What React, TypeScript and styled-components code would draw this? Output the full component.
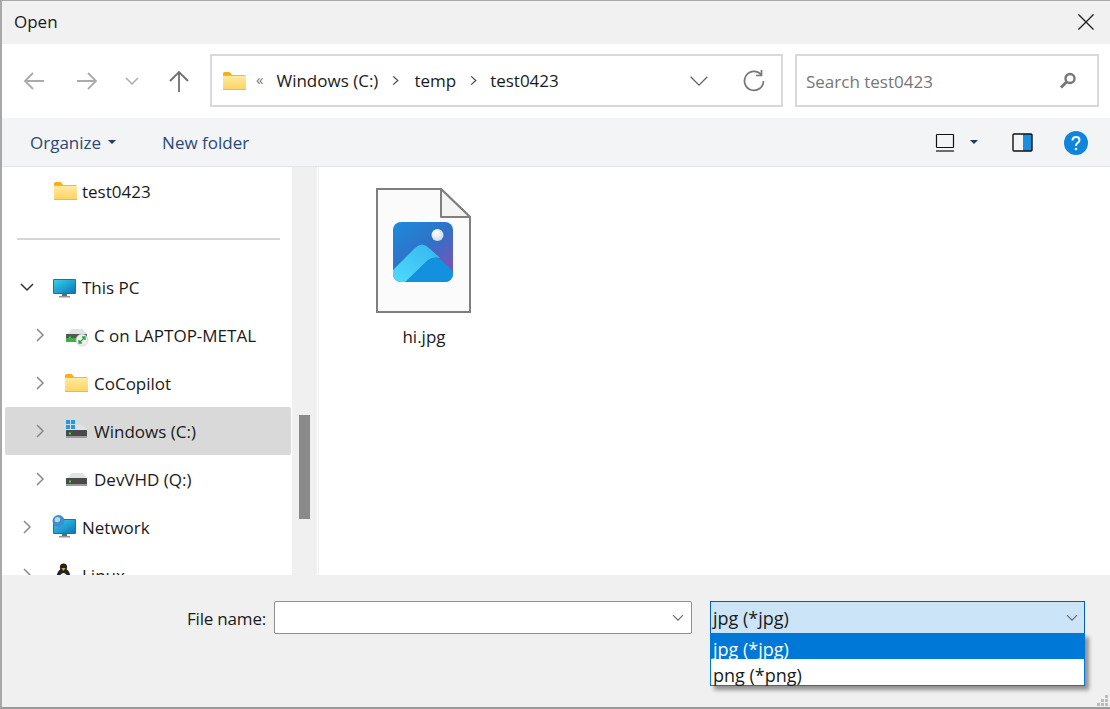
import React from 'react'
import styled, { createGlobalStyle } from 'styled-components'

const GlobalStyle = createGlobalStyle`
  html, body {
    margin: 0;
    padding: 0;
    background: #fff;
  }
  body {
    font-family: 'Open Sans', 'Noto Sans', 'Liberation Sans', sans-serif;
    font-size: 17px;
    color: #1a1a1a;
    overflow: hidden;
  }
`

const Dialog = styled.div`
  position: relative;
  width: 1110px;
  height: 709px;
  box-sizing: border-box;
  border-top: 1px solid #a8a8a8;
  border-left: 2px solid #a8a8a8;
  border-bottom: 2px solid #9a9a9a;
  display: flex;
  flex-direction: column;
  overflow: hidden;
`

const TitleBar = styled.div`
  height: 43px;
  flex: none;
  box-sizing: border-box;
  background: #f1f1f1;
  display: flex;
  align-items: center;
  justify-content: space-between;
  padding: 0 15px 1px 12px;
`

const TitleText = styled.span`
  padding-bottom: 2px;
`

const AddressRow = styled.div`
  height: 74px;
  flex: none;
  box-sizing: border-box;
  background: #fff;
  display: flex;
  align-items: center;
  padding: 0 9px 1px 0;
`

const NavGroup = styled.div`
  width: 208px;
  flex: none;
  display: flex;
  align-items: center;
`

const NavButton = styled.span<{ $w: number }>`
  width: ${(p) => p.$w}px;
  display: flex;
  justify-content: center;
  flex: none;
`

const RefreshButton = styled(NavButton)`
  margin-left: 10px;
`

const FieldBox = styled.div<{ $w: number }>`
  width: ${(p) => p.$w}px;
  height: 53px;
  box-sizing: border-box;
  border: 2px solid #d9d9d9;
  display: flex;
  align-items: center;
  flex: none;
`

const AddressBox = styled(FieldBox)`
  padding: 0 2px 0 11px;
  margin-right: 12px;
`

const Crumbs = styled.div`
  flex: 1;
  display: flex;
  align-items: center;
  color: #1a1a1a;
`

const CrumbSep = styled.span<{ $mr: number }>`
  display: flex;
  margin: 0 ${(p) => p.$mr}px 0 12px;
`

const Overflow = styled.span`
  font-size: 15px;
  color: #777;
  margin: -3px 13px 0 10px;
`

const SearchBox = styled(FieldBox)`
  padding: 0 20px 0 9px;
  justify-content: space-between;
  color: #767676;
`

const SearchText = styled.span`
  padding-top: 2px;
`

const Toolbar = styled.div`
  height: 49px;
  flex: none;
  box-sizing: border-box;
  background: #f3f4f6;
  border-bottom: 1px solid #e4e4e4;
  display: flex;
  align-items: center;
  padding: 1px 10px 0 28px;
  color: #2a4a73;
`

const ToolLabel = styled.span`
  display: flex;
  align-items: center;
  gap: 7px;
  margin-right: 46px;
`

const Caret = styled.span`
  width: 0;
  height: 0;
  border-left: 4px solid transparent;
  border-right: 4px solid transparent;
  border-top: 4px solid #1f3a63;
  margin-top: -1px;
`

const ToolIcons = styled.div`
  margin-left: auto;
  display: flex;
  align-items: center;
`

const ToolIcon = styled.span<{ $mr: number }>`
  display: flex;
  margin-right: ${(p) => p.$mr}px;
`

const Main = styled.div`
  flex: 1;
  min-height: 0;
  display: flex;
  background: #fff;
`

const Sidebar = styled.div`
  width: 290px;
  flex: none;
  overflow: hidden;
  padding: 0 1px 0 3px;
  box-sizing: border-box;
`

const Row = styled.div<{ $selected?: boolean; $indent: number }>`
  height: 48px;
  box-sizing: border-box;
  display: flex;
  align-items: center;
  padding-left: ${(p) => p.$indent}px;
  border-radius: 2px;
  background: ${(p) => (p.$selected ? '#d9d9d9' : 'transparent')};
`

const Chevron = styled.span`
  width: 22px;
  display: flex;
  justify-content: center;
  flex: none;
  margin-right: 14px;
`

const RowIcon = styled.span<{ $mr: number }>`
  display: flex;
  flex: none;
  margin-right: ${(p) => p.$mr}px;
`

const Divider = styled.div`
  height: 48px;
  display: flex;
  align-items: center;
  padding: 0 11px 0 12px;
  &::after {
    content: '';
    flex: 1;
    height: 2px;
    background: #d6d6d6;
  }
`

const ScrollTrack = styled.div`
  width: 25px;
  flex: none;
  background: #f0f0f0;
  padding: 248px 7px 0;
  box-sizing: border-box;
`

const ScrollThumb = styled.div`
  height: 104px;
  background: #8a8a8a;
`

const Files = styled.div`
  flex: 1;
  border-left: 1px solid #ededed;
  margin-left: 1px;
  padding: 21px 0 0 40px;
`

const FileTile = styled.div`
  width: 130px;
  display: flex;
  flex-direction: column;
  align-items: center;
  gap: 11px;
`

const Footer = styled.div`
  height: 132px;
  flex: none;
  background: #f0f0f0;
  padding: 26px 25px 0 0;
  box-sizing: border-box;
  display: flex;
  justify-content: flex-end;
  align-items: flex-start;
  gap: 18px;
`

const FileNameGroup = styled.div`
  display: flex;
  align-items: center;
  gap: 8px;
`

const FileNameLabel = styled.span`
  padding-top: 2px;
  letter-spacing: -0.2px;
`

const FileNameInput = styled.div`
  width: 418px;
  height: 33px;
  box-sizing: border-box;
  background: #fff;
  border: 1px solid #8f8f8f;
  border-radius: 2px;
  display: flex;
  align-items: center;
  justify-content: flex-end;
  padding-right: 7px;
`

const FilterSelect = styled.div`
  width: 375px;
  height: 33px;
  box-sizing: border-box;
  background: #cce4f7;
  border: 1px solid #005fb8;
  display: flex;
  align-items: center;
  justify-content: space-between;
  padding: 0 6px 0 2px;
  color: #1a1a1a;
  font-size: 18px;
`

const FilterMenu = styled.div`
  position: absolute;
  left: 708px;
  top: 632px;
  width: 375px;
  box-sizing: border-box;
  background: #fff;
  border: 1px solid #0078d7;
  border-top: none;
  box-shadow: 4px 4px 4px rgba(0, 0, 0, 0.4);
  font-size: 18px;
`

const FilterOption = styled.div<{ $active?: boolean }>`
  height: 26px;
  box-sizing: border-box;
  line-height: 26px;
  padding: 3px 0 0 2px;
  background: ${(p) => (p.$active ? '#0078d7' : '#fff')};
  color: ${(p) => (p.$active ? '#fff' : '#1a1a1a')};
`

const Grip = styled.svg`
  position: absolute;
  right: 1px;
  bottom: 0;
`

const Stroke = ({ d, color, w = 1.6, size = 24 }: { d: string; color: string; w?: number; size?: number }) => (
  <svg width={size} height={size} viewBox="0 0 24 24" fill="none" stroke={color} strokeWidth={w}>
    <path d={d} />
  </svg>
)

const Folder = ({ w = 23, h = 18 }: { w?: number; h?: number }) => (
  <svg width={w} height={h} viewBox="0 0 23 18">
    <defs>
      <linearGradient id="fold" x1="0" y1="0" x2="0" y2="1">
        <stop offset="0" stopColor="#ffeaa0" />
        <stop offset="1" stopColor="#fdd468" />
      </linearGradient>
    </defs>
    <path d="M0 1.5 Q0 0 1.5 0 H6.5 L9 2.5 V4 H0 Z" fill="#f6b015" />
    <path d="M0 3 H21.5 Q23 3 23 4.5 V18 H0 Z" fill="#f4b73c" />
    <path d="M0 4 H23 V17 H0 Z" fill="url(#fold)" />
  </svg>
)

const Monitor = ({ globe }: { globe?: boolean }) => (
  <svg width="25" height="25" viewBox="0 0 25 25">
    <defs>
      <linearGradient id="scr" x1="0" y1="0" x2="1" y2="1">
        <stop offset="0" stopColor="#35d3e8" />
        <stop offset="1" stopColor="#0a74bd" />
      </linearGradient>
    </defs>
    <rect x="1" y="4" width="23" height="15" rx="1" fill="#4d6470" />
    <rect x="2" y="5" width="21" height="13" fill="url(#scr)" />
    <rect x="10" y="19" width="5" height="2" fill="#5f6d75" />
    <rect x="7" y="21" width="11" height="1.5" fill="#8d979d" />
    {globe ? (
      <>
        <circle cx="6.5" cy="6" r="6" fill="#3b8fd0" />
        <path d="M3 3 Q6 1 8 3 Q9 6 6 7 Q3 8 2.5 5 Z" fill="#b5d7ef" />
      </>
    ) : null}
  </svg>
)

const Drive = ({ badge, win }: { badge?: boolean; win?: boolean }) => (
  <svg width="24" height="24" viewBox="0 0 24 24">
    <path d="M3 11 L6.5 6 H17.5 L22 11 Z" fill="#dfe3e6" />
    <rect x="1" y="11" width="21" height="7" rx="0.5" fill={badge ? '#555' : '#4a4a4a'} />
    <rect x="1" y="17" width="21" height="2" fill="#9a9a9a" />
    <rect x="4" y="13.5" width="2" height="2" fill="#3fdc3f" />
    {win ? (
      <>
        <rect x="1" y="1" width="4" height="4" fill="#1e9be8" />
        <rect x="6" y="1" width="4" height="4" fill="#1e9be8" />
        <rect x="1" y="6" width="4" height="4" fill="#1e9be8" />
        <rect x="6" y="6" width="4" height="4" fill="#1e9be8" />
      </>
    ) : null}
    {badge ? (
      <>
        <rect x="1" y="15" width="15" height="4" fill="#3fae4a" />
        <circle cx="17" cy="17" r="6" fill="#eef0ee" stroke="#bbb" strokeWidth="0.5" />
        <path d="M14 20 L20 14 M17 14 H20 V17 M14 17 V20 H17" stroke="#2ea043" strokeWidth="1.3" fill="none" />
      </>
    ) : null}
  </svg>
)

const Penguin = () => (
  <svg width="23" height="24" viewBox="0 0 23 24">
    <ellipse cx="11.5" cy="15" rx="7" ry="10" fill="#222" />
    <ellipse cx="11.5" cy="17" rx="4.5" ry="7" fill="#f4f4f4" />
    <circle cx="11.5" cy="4" r="3.6" fill="#222" />
    <path d="M9.5 5 L13.5 5 L11.5 8 Z" fill="#e8a81e" />
  </svg>
)

const ImageFile = () => (
  <svg width="96" height="126" viewBox="0 0 96 126">
    <defs>
      <linearGradient id="sky" x1="0" y1="0" x2="0.8" y2="1">
        <stop offset="0" stopColor="#1c8cdc" />
        <stop offset="0.5" stopColor="#2e72c8" />
        <stop offset="1" stopColor="#7f52b6" />
      </linearGradient>
      <linearGradient id="ridge" x1="0" y1="1" x2="1" y2="0">
        <stop offset="0" stopColor="#4fdcfb" />
        <stop offset="1" stopColor="#34b4ee" />
      </linearGradient>
      <radialGradient id="sun" cx="0.4" cy="0.35" r="0.7">
        <stop offset="0" stopColor="#ffffff" />
        <stop offset="1" stopColor="#cfd6e2" />
      </radialGradient>
      <clipPath id="tile">
        <rect x="17" y="34" width="60" height="60" rx="8" />
      </clipPath>
    </defs>
    <path d="M1 1 H65 L94 29 V124 H1 Z" fill="#fbfbfb" stroke="#7f7f7f" strokeWidth="2" />
    <path d="M65 1 V29 H94 Z" fill="#f4f4f4" stroke="#7f7f7f" strokeWidth="2" strokeLinejoin="round" />
    <g clipPath="url(#tile)">
      <rect x="17" y="34" width="60" height="60" fill="url(#sky)" />
      <circle cx="61.5" cy="47" r="6" fill="url(#sun)" />
      <path d="M17 82 L39 60 Q46 53 53 60 L64 70 Q56 68 50 74 L30 94 H17 Z" fill="url(#ridge)" />
      <path d="M29 94 L49 75 Q56 67 64 71 L77 83 V94 Z" fill="#1491de" />
    </g>
  </svg>
)

const SmallChevron = ({ open }: { open?: boolean }) =>
  open ? (
    <Stroke size={18} color="#333" w={2} d="M4 8 L12 16 L20 8" />
  ) : (
    <Stroke size={18} color="#8a8a8a" w={2} d="M8 4 L16 12 L8 20" />
  )

const DropChevron = () => (
  <svg width="12" height="8" viewBox="0 0 12 8" fill="none" stroke="#666" strokeWidth="1.1">
    <path d="M1 1.2 L6 6.2 L11 1.2" />
  </svg>
)

export default function App() {
  return (
    <>
      <GlobalStyle />
      <Dialog>
        <TitleBar>
          <TitleText>Open</TitleText>
          <Stroke size={18} color="#222" w={1.8} d="M2 2 L22 22 M22 2 L2 22" />
        </TitleBar>
        <AddressRow>
          <NavGroup>
            <NavButton $w={64}>
              <Stroke color="#ababab" w={1.8} d="M22 12 H3 M11 4 L3 12 L11 20" />
            </NavButton>
            <NavButton $w={42}>
              <Stroke color="#ababab" w={1.8} d="M2 12 H21 M13 4 L21 12 L13 20" />
            </NavButton>
            <NavButton $w={48}>
              <Stroke size={18} color="#ababab" w={2} d="M4 8 L12 16 L20 8" />
            </NavButton>
            <NavButton $w={46}>
              <Stroke color="#6f6f6f" w={1.8} d="M12 23 V3 M3 12 L12 3 L21 12" />
            </NavButton>
          </NavGroup>
          <AddressBox $w={573}>
            <Folder />
            <Overflow>«</Overflow>
            <Crumbs>
              Windows (C:)
              <CrumbSep $mr={13}>
                <Stroke size={11} color="#444" w={2.6} d="M7 3 L17 12 L7 21" />
              </CrumbSep>
              temp
              <CrumbSep $mr={11}>
                <Stroke size={11} color="#444" w={2.6} d="M7 3 L17 12 L7 21" />
              </CrumbSep>
              test0423
            </Crumbs>
            <NavButton $w={40}>
              <Stroke size={20} color="#666" w={1.6} d="M2 7 L12 17 L22 7" />
            </NavButton>
            <RefreshButton $w={50}>
              <Stroke color="#777" w={1.7} d="M19 5.5 A9.5 9.5 0 1 0 21.5 12 M19.5 1 V6.5 H14" />
            </RefreshButton>
          </AddressBox>
          <SearchBox $w={304}>
            <SearchText>Search test0423</SearchText>
            <svg width="18" height="18" viewBox="0 0 18 18" fill="none" stroke="#777">
              <circle cx="11" cy="6.5" r="4.5" strokeWidth="2.4" />
              <path d="M7.5 10 L2 15.5" strokeWidth="3" />
            </svg>
          </SearchBox>
        </AddressRow>
        <Toolbar>
          <ToolLabel>
            Organize <Caret />
          </ToolLabel>
          <ToolLabel>New folder</ToolLabel>
          <ToolIcons>
            <ToolIcon $mr={15}>
              <svg width="20" height="19" viewBox="0 0 20 19" fill="none" stroke="#111">
                <rect x="1.5" y="1.5" width="17" height="13" rx="0.5" strokeWidth="1.2" />
                <path d="M1 18 H19" strokeWidth="1.2" />
              </svg>
            </ToolIcon>
            <ToolIcon $mr={34}>
              <Caret />
            </ToolIcon>
            <ToolIcon $mr={31}>
              <svg width="21" height="19" viewBox="0 0 21 19">
                <rect x="11" y="1" width="9" height="17" fill="#1a8fe0" />
                <rect x="1" y="1" width="19" height="17" rx="1" fill="none" stroke="#111" strokeWidth="1.4" />
              </svg>
            </ToolIcon>
            <ToolIcon $mr={12}>
              <svg width="24" height="24" viewBox="0 0 24 24">
                <circle cx="12" cy="12" r="12" fill="#0f86dc" />
                <path d="M8.5 9.5 Q8.5 6 12 6 Q15.5 6 15.5 9 Q15.5 11 13.5 12 Q12 13 12 15" fill="none" stroke="#fff" strokeWidth="2" />
                <circle cx="12" cy="18" r="1.3" fill="#fff" />
              </svg>
            </ToolIcon>
          </ToolIcons>
        </Toolbar>
        <Main>
          <Sidebar>
            <Row $indent={49}>
              <RowIcon $mr={5}>
                <Folder />
              </RowIcon>
              test0423
            </Row>
            <Divider />
            <Row $indent={11}>
              <Chevron>
                <SmallChevron open />
              </Chevron>
              <RowIcon $mr={5}>
                <Monitor />
              </RowIcon>
              This PC
            </Row>
            <Row $indent={24}>
              <Chevron>
                <SmallChevron />
              </Chevron>
              <RowIcon $mr={5}>
                <Drive badge />
              </RowIcon>
              C on LAPTOP-METAL
            </Row>
            <Row $indent={24}>
              <Chevron>
                <SmallChevron />
              </Chevron>
              <RowIcon $mr={6}>
                <Folder />
              </RowIcon>
              CoCopilot
            </Row>
            <Row $indent={24} $selected>
              <Chevron>
                <SmallChevron />
              </Chevron>
              <RowIcon $mr={5}>
                <Drive win />
              </RowIcon>
              Windows (C:)
            </Row>
            <Row $indent={24}>
              <Chevron>
                <SmallChevron />
              </Chevron>
              <RowIcon $mr={5}>
                <Drive />
              </RowIcon>
              DevVHD (Q:)
            </Row>
            <Row $indent={11}>
              <Chevron>
                <SmallChevron />
              </Chevron>
              <RowIcon $mr={5}>
                <Monitor globe />
              </RowIcon>
              Network
            </Row>
            <Row $indent={11}>
              <Chevron>
                <SmallChevron />
              </Chevron>
              <RowIcon $mr={7}>
                <Penguin />
              </RowIcon>
              Linux
            </Row>
          </Sidebar>
          <ScrollTrack>
            <ScrollThumb />
          </ScrollTrack>
          <Files>
            <FileTile>
              <ImageFile />
              <span>hi.jpg</span>
            </FileTile>
          </Files>
        </Main>
        <Footer>
          <FileNameGroup>
            <FileNameLabel>File name:</FileNameLabel>
            <FileNameInput>
              <DropChevron />
            </FileNameInput>
          </FileNameGroup>
          <FilterSelect>
            jpg (*jpg)
            <DropChevron />
          </FilterSelect>
        </Footer>
        <FilterMenu>
          <FilterOption $active>jpg (*jpg)</FilterOption>
          <FilterOption>png (*png)</FilterOption>
        </FilterMenu>
        <Grip width="12" height="12" viewBox="0 0 12 12" fill="#bcbcbc">
          <rect x="8" y="0" width="3" height="3" />
          <rect x="4" y="4" width="3" height="3" />
          <rect x="8" y="4" width="3" height="3" />
          <rect x="0" y="8" width="3" height="3" />
          <rect x="4" y="8" width="3" height="3" />
          <rect x="8" y="8" width="3" height="3" />
        </Grip>
      </Dialog>
    </>
  )
}
